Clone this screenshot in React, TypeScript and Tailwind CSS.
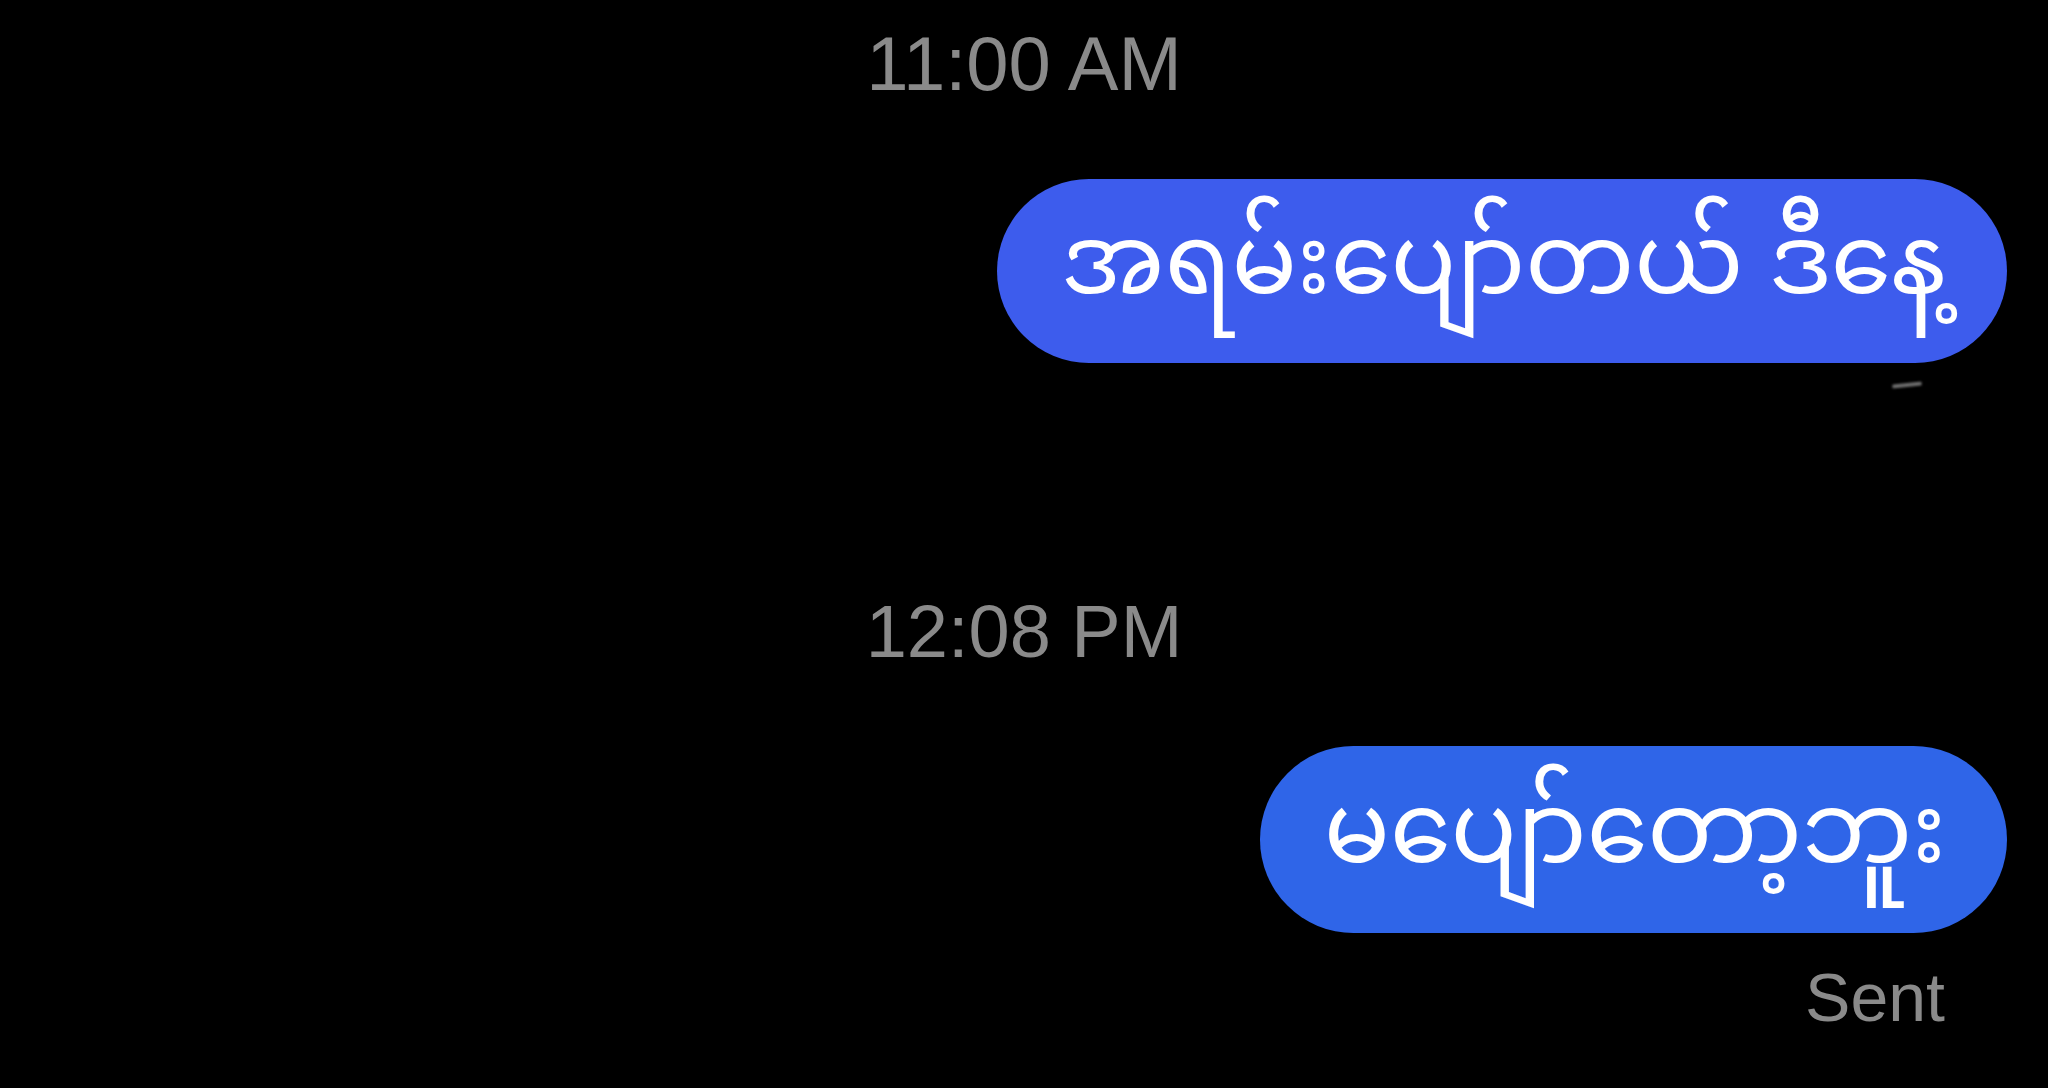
const MESSAGES = [
  { time: '11:00 AM', text: 'အရမ်းပျော်တယ် ဒီနေ့', color: 'bg-[#3d5ced]' },
  { time: '12:08 PM', text: 'မပျော်တော့ဘူး', color: 'bg-[#2f65e8]' },
];

const myanmarFont = { fontFamily: '"Noto Sans Myanmar", "Padauk", "Myanmar Text", "Noto Sans", sans-serif' };

export default function App() {
  return (
    <div
      className="w-[2048px] h-[1088px] bg-black overflow-hidden flex flex-col"
      style={{ fontFamily: '"Liberation Sans", Arial, sans-serif' }}
    >
      <div className="pt-[26px] text-center text-[76px] leading-none text-[#8a8a8a]">
        {MESSAGES[0].time}
      </div>

      <div className="relative mt-[77px] flex justify-end pr-[41px]">
        <div
          className={`${MESSAGES[0].color} h-[184px] rounded-full pl-[64px] pr-[61px] flex items-center text-white text-[97px]`}
          style={myanmarFont}
        >
          {MESSAGES[0].text}
        </div>
        {/* faint glint under the first bubble */}
        <div className="absolute right-[126px] -bottom-[24px] w-[30px] h-[4px] rounded-full bg-[#6b6b6b] blur-[1px] -rotate-6" />
      </div>

      <div className="mt-[232px] text-center text-[74px] leading-none text-[#8a8a8a]">
        {MESSAGES[1].time}
      </div>

      <div className="mt-[77px] flex justify-end pr-[41px]">
        <div
          className={`${MESSAGES[1].color} h-[187px] rounded-full pl-[64px] pr-[61px] flex items-center text-white text-[98px]`}
          style={myanmarFont}
        >
          {MESSAGES[1].text}
        </div>
      </div>

      <div className="mt-[30px] flex justify-end pr-[103px] text-[68px] leading-none text-[#8a8a8a]">
        Sent
      </div>
    </div>
  );
}
